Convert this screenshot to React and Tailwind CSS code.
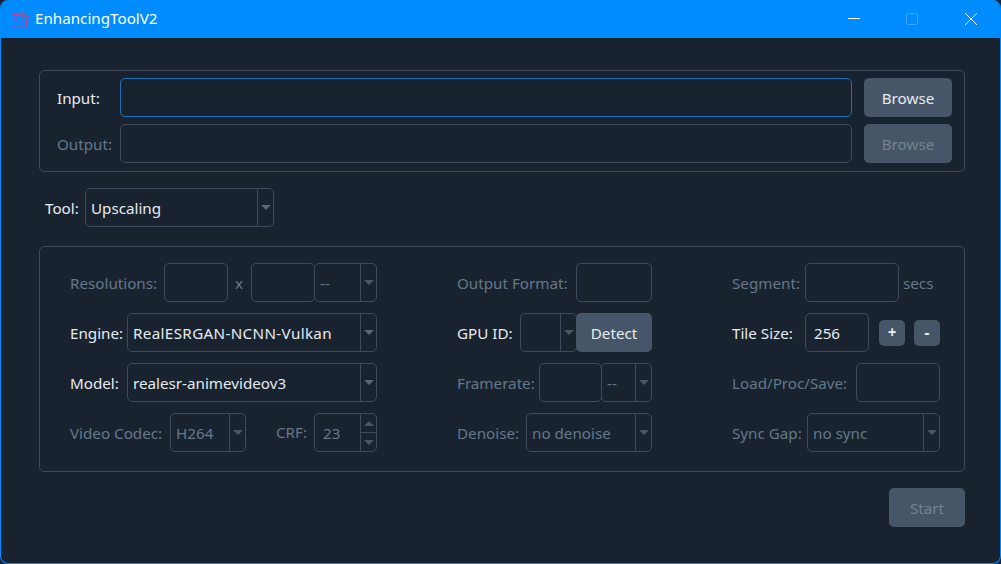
const border = "border border-[#3f4b5c]";
const dim = "text-[#64788c]";
const lit = "text-[#e6ebf0]";

function Label({ children, on }) {
  return <span className={`whitespace-nowrap pt-[2px] ${on ? lit : dim}`}>{children}</span>;
}

function Caret({ on }) {
  return (
    <svg width="10" height="5" viewBox="0 0 10 5" className="block">
      <path d="M0 0H10L5 5Z" fill={on ? "#5a6675" : "#4a5665"} />
    </svg>
  );
}

function Input({ w, value, on }) {
  return (
    <div className={`h-[39px] ${w} shrink-0 rounded-[5px] ${border} flex items-center pl-[8px] pt-[2px] ${on ? lit : dim}`}>
      {value}
    </div>
  );
}

function Combo({ w, value, on, cls = "" }) {
  return (
    <div className={`h-[39px] ${w} shrink-0 rounded-[5px] ${border} flex items-center`}>
      <span className={`flex-1 pl-[5px] pt-[2px] whitespace-nowrap ${cls} ${on ? lit : dim}`}>{value}</span>
      <span className="w-[16px] h-full border-l border-[#3f4b5c] flex items-center justify-center">
        <Caret on={on} />
      </span>
    </div>
  );
}

function Spin({ w, value }) {
  return (
    <div className={`h-[39px] ${w} shrink-0 rounded-[5px] ${border} flex items-center`}>
      <span className={`flex-1 pl-[8px] pt-[2px] ${dim}`}>{value}</span>
      <span className="w-[16px] h-full border-l border-[#3f4b5c] flex flex-col">
        <span className="flex-1 flex items-center justify-center border-b border-[#3f4b5c]">
          <svg width="10" height="5" viewBox="0 0 10 5"><path d="M0 5H10L5 0Z" fill="#4a5665" /></svg>
        </span>
        <span className="flex-1 flex items-center justify-center">
          <Caret />
        </span>
      </span>
    </div>
  );
}

function Row({ children }) {
  return <div className="h-[39px] flex items-center">{children}</div>;
}

function AppIcon() {
  return (
    <svg width="19" height="17" viewBox="0 0 19 17" fill="none" strokeWidth="1">
      <defs>
        <linearGradient id="lg" x1="0" y1="1" x2="1" y2="0">
          <stop offset="0" stopColor="#8a4df5" />
          <stop offset="1" stopColor="#f0306a" />
        </linearGradient>
      </defs>
      <path d="M9 3.5H2a1.5 1.5 0 0 0-1.5 1.5v9.5A1.5 1.5 0 0 0 2 16h12a1.5 1.5 0 0 0 1.5-1.5V8" stroke="url(#lg)" />
      <path d="M2.5 13l4-3.5 2.5 2 4-4" stroke="url(#lg)" />
      <path d="M3.5 7.5a1.2 1.2 0 1 0 2.4 0a1.2 1.2 0 1 0-2.4 0" stroke="url(#lg)" />
      <path d="M11.5 0.5l.8 2.2 2.2.8-2.2.8-.8 2.2-.8-2.2-2.2-.8 2.2-.8z" stroke="#d8406a" />
      <path d="M16.5 3.5l.6 1.4 1.4.6-1.4.6-.6 1.4-.6-1.4-1.4-.6 1.4-.6z" stroke="#f0306a" />
    </svg>
  );
}

export default function App() {
  return (
    <div className="w-[1001px] h-[564px] bg-[#1a2433] overflow-hidden text-[15.2px] leading-none" style={{ fontFamily: '"Noto Sans", "Open Sans", sans-serif' }}>
      <div className="h-full rounded-[8px] border border-t-0 border-[#008cff] bg-[#19232f] overflow-hidden flex flex-col">
        <div className="h-[38px] shrink-0 -mx-px bg-[#008cff] flex items-center pl-[11px] text-white">
          <AppIcon />
          <span className="ml-[5px]">EnhancingToolV2</span>
          <div className="ml-auto flex items-center">
            <svg width="12" height="12" viewBox="0 0 12 12" className="mr-[46px]"><path d="M0 5.5H12" stroke="#fff" /></svg>
            <svg width="12" height="12" viewBox="0 0 12 12" className="mr-[47px]"><rect x="0.5" y="0.5" width="11" height="11" rx="1" stroke="#3aa6ff" fill="none" /></svg>
            <svg width="12" height="12" viewBox="0 0 12 12" className="mr-[24px]"><path d="M0 0L12 12M12 0L0 12" stroke="#fff" /></svg>
          </div>
        </div>

        <div className="flex-1 pl-[38px] pr-[35px] pt-[32px] flex flex-col">
          <div className={`h-[102px] rounded-[5px] ${border} pl-[17px] pr-[12px] pt-[7px] flex flex-col gap-[7px]`}>
            <div className="flex items-center">
              <span className={`w-[63px] pt-[2px] ${lit}`}>Input:</span>
              <div className="h-[39px] flex-1 rounded-[5px] border border-[#1a72bd]" />
              <button className={`h-[39px] w-[88px] ml-[12px] pt-[2px] rounded-[5px] bg-[#475569] ${lit}`}>Browse</button>
            </div>
            <div className="flex items-center">
              <span className={`w-[63px] pt-[2px] ${dim}`}>Output:</span>
              <div className={`h-[39px] flex-1 rounded-[5px] ${border}`} />
              <button className={`h-[39px] w-[88px] ml-[12px] pt-[2px] rounded-[5px] bg-[#475569] text-[#74838f]`}>Browse</button>
            </div>
          </div>

          <div className="mt-[16px] flex items-center pl-[6px]">
            <span className={`w-[40px] pt-[2px] ${lit}`}>Tool:</span>
            <Combo w="w-[189px]" value="Upscaling" on />
          </div>

          <div className={`mt-[19px] h-[226px] rounded-[5px] ${border} pl-[30px] pr-[24px] pt-[16px] flex`}>
            <div className="w-[307px] flex flex-col gap-[11px]">
              <Row>
                <Label>Resolutions:</Label>
                <span className="ml-auto"><Input w="w-[64px]" /></span>
                <span className={`mx-[7px] w-[9px] pt-[2px] ${dim}`}>x</span>
                <Input w="w-[64px]" />
                <span className="-ml-px"><Combo w="w-[63px]" value="--" /></span>
              </Row>
              <Row>
                <Label on>Engine:</Label>
                <span className="ml-auto"><Combo w="w-[250px]" value="RealESRGAN-NCNN-Vulkan" on cls="tracking-[0.35px]" /></span>
              </Row>
              <Row>
                <Label on>Model:</Label>
                <span className="ml-auto"><Combo w="w-[250px]" value="realesr-animevideov3" on /></span>
              </Row>
              <Row>
                <span className="w-[100px] flex"><Label>Video Codec:</Label></span>
                <Combo w="w-[76px]" value="H264" />
                <span className="ml-auto"><Label>CRF:</Label></span>
                <span className="ml-[7px]"><Spin w="w-[63px]" value="23" /></span>
              </Row>
            </div>

            <div className="ml-[80px] w-[195px] flex flex-col gap-[11px]">
              <Row>
                <Label>Output Format:</Label>
                <span className="ml-auto"><Input w="w-[76px]" /></span>
              </Row>
              <Row>
                <Label on>GPU ID:</Label>
                <span className="ml-auto"><Combo w="w-[57px]" /></span>
                <button className={`h-[39px] w-[76px] -ml-px pt-[2px] rounded-[5px] bg-[#475569] ${lit}`}>Detect</button>
              </Row>
              <Row>
                <Label>Framerate:</Label>
                <span className="ml-auto"><Input w="w-[63px]" /></span>
                <span className="-ml-px"><Combo w="w-[51px]" value="--" /></span>
              </Row>
              <Row>
                <Label>Denoise:</Label>
                <span className="ml-auto"><Combo w="w-[126px]" value="no denoise" /></span>
              </Row>
            </div>

            <div className="ml-[80px] w-[208px] flex flex-col gap-[11px]">
              <Row>
                <span className="w-[73px] flex"><Label>Segment:</Label></span>
                <Input w="w-[94px]" />
                <span className={`ml-[4px] pt-[2px] ${dim}`}>secs</span>
              </Row>
              <Row>
                <span className="w-[73px] flex"><Label on>Tile Size:</Label></span>
                <Input w="w-[64px]" value="256" on />
                <button className={`ml-[10px] w-[26px] h-[26px] rounded-[5px] bg-[#475569] font-bold ${lit}`}>+</button>
                <button className={`ml-[9px] w-[26px] h-[26px] rounded-[5px] bg-[#475569] font-bold ${lit}`}>-</button>
              </Row>
              <Row>
                <Label>Load/Proc/Save:</Label>
                <span className="ml-auto"><Input w="w-[84px]" /></span>
              </Row>
              <Row>
                <Label>Sync Gap:</Label>
                <span className="ml-auto"><Combo w="w-[133px]" value="no sync" /></span>
              </Row>
            </div>
          </div>

          <div className="mt-[16px] flex justify-end">
            <button className="h-[39px] w-[76px] pt-[2px] rounded-[5px] bg-[#475569] text-[#74838f]">Start</button>
          </div>
        </div>
      </div>
    </div>
  );
}
